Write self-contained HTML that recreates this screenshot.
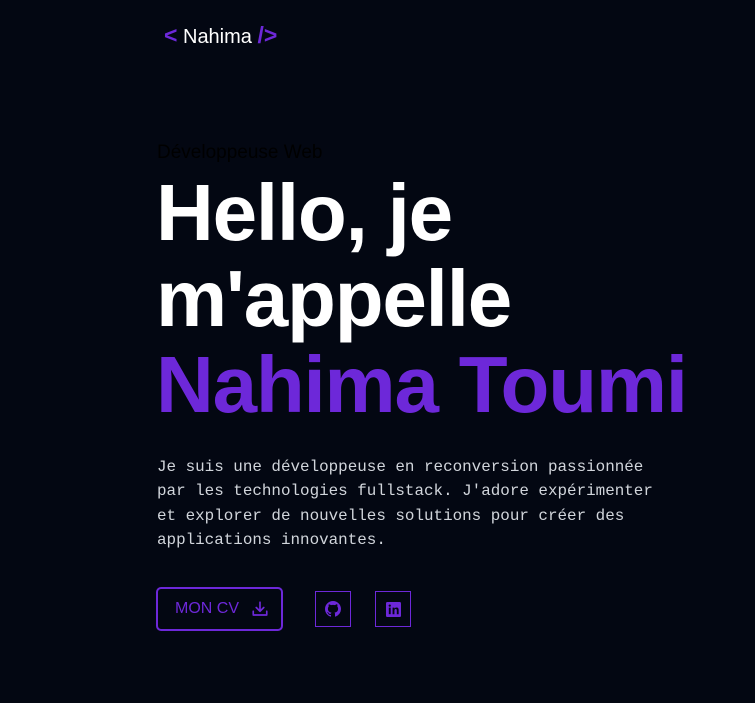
<!DOCTYPE html>
<html><head><meta charset="utf-8"><style>
html,body{margin:0;padding:0;background:#030712;width:755px;height:703px;overflow:hidden;font-family:"Liberation Sans",sans-serif}
.logo{position:absolute;left:164px;top:22px;font-size:20px;color:#fff;white-space:nowrap}
.logo b{color:#6d28d9;font-weight:bold;font-size:23px}
.sub{position:absolute;left:157px;top:142px;font-size:19px;color:#000}
h1{position:absolute;left:156px;top:170px;margin:0;font-size:80px;line-height:86px;font-weight:bold;color:#fff;letter-spacing:-1.2px}
h1 span{color:#6d28d9}
p{position:absolute;left:157px;top:455px;margin:0;font-family:"Liberation Mono",monospace;font-size:15.9px;line-height:24.3px;color:#d1d5db;width:520px}
.cv{position:absolute;left:156px;top:587px;width:123px;height:40px;border:2px solid #6d28d9;border-radius:5px;color:#6d28d9;font-size:16px;display:flex;align-items:center;box-sizing:content-box}
.cv span{margin-left:17px}
.cv svg{margin-left:12px}
.ic{position:absolute;top:591px;width:34px;height:34px;border:1px solid #6d28d9;display:flex;align-items:center;justify-content:center}
</style></head><body>
<div class="logo"><b>&lt;</b> Nahima <b>/&gt;</b></div>
<div class="sub">Développeuse Web</div>
<h1>Hello, je<br>m'appelle<br><span>Nahima Toumi</span></h1>
<p>Je suis une développeuse en reconversion passionnée par les technologies fullstack. J'adore expérimenter et explorer de nouvelles solutions pour créer des applications innovantes.</p>
<div class="cv"><span>MON CV</span><svg width="18" height="18" viewBox="0 0 24 24" fill="none" stroke="#6d28d9" stroke-width="2.2" stroke-linecap="round" stroke-linejoin="round"><path d="M3 15v5h18v-5M12 3v12M7 10l5 5 5-5"/></svg></div>
<div class="ic" style="left:315px"><svg width="16" height="16" viewBox="0 0 16 16"><path fill="#6d28d9" d="M8 0C3.58 0 0 3.58 0 8c0 3.54 2.29 6.53 5.47 7.59.4.07.55-.17.55-.38v-1.33c-2.23.48-2.7-1.07-2.7-1.07-.36-.92-.89-1.17-.89-1.17-.73-.5.06-.49.06-.49.8.06 1.23.83 1.23.83.71 1.22 1.87.87 2.33.66.07-.52.28-.87.51-1.07-1.78-.2-3.64-.89-3.64-3.95 0-.87.31-1.59.82-2.15-.08-.2-.36-1.02.08-2.12 0 0 .67-.21 2.2.82A7.6 7.6 0 0 1 8 3.87c.68 0 1.36.09 2 .27 1.53-1.04 2.2-.82 2.2-.82.44 1.1.16 1.92.08 2.12.51.56.82 1.27.82 2.15 0 3.07-1.87 3.75-3.65 3.95.29.25.54.73.54 1.48v2.19c0 .21.15.46.55.38A8 8 0 0 0 16 8c0-4.42-3.58-8-8-8z"/></svg></div>
<div class="ic" style="left:375px"><svg width="15" height="15" viewBox="0 0 16 16"><rect width="16" height="16" rx="1.5" fill="#6d28d9"/><rect x="3" y="6" width="2" height="7" fill="#030712"/><circle cx="4" cy="3.8" r="1.2" fill="#030712"/><path d="M7 6h2v1c.5-.8 1.3-1.2 2.3-1.2 1.6 0 2.2 1 2.2 2.8V13h-2V9c0-.9-.3-1.5-1.1-1.5S9 8.1 9 9v4H7z" fill="#030712"/></svg></div>
</body></html>
